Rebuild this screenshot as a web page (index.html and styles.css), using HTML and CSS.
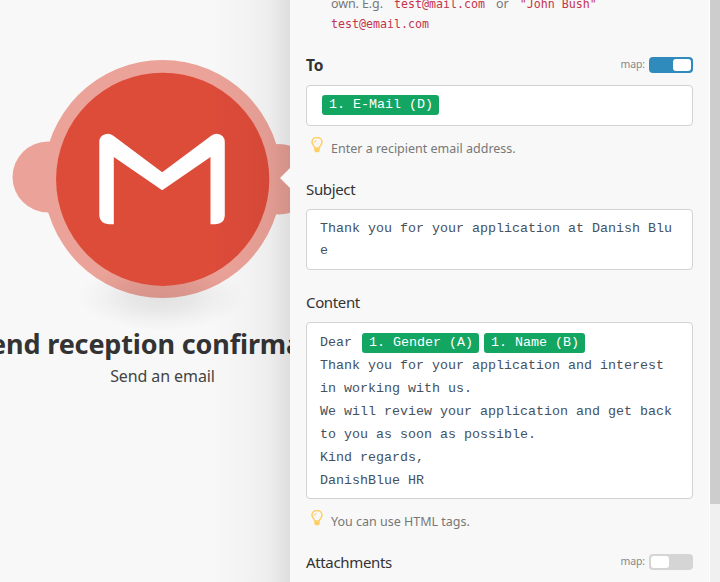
FILE: index.html
```html
<!DOCTYPE html>
<html lang="en">
<head>
<meta charset="utf-8">
<title>Send an email</title>
<link rel="stylesheet" href="styles.css">
</head>
<body>
<div class="app">
  <section class="canvas">
    <svg class="module" width="290" height="324" viewBox="0 0 290 324">
      <defs>
        <radialGradient id="shade">
          <stop offset="0" stop-color="#000" stop-opacity=".09"/>
          <stop offset=".35" stop-color="#000" stop-opacity=".07"/>
          <stop offset=".7" stop-color="#000" stop-opacity=".028"/>
          <stop offset="1" stop-color="#000" stop-opacity="0"/>
        </radialGradient>
      </defs>
      <g fill="#eba298">
        <circle cx="48" cy="177" r="35.5"/>
        <circle cx="279" cy="179.3" r="35.3"/>
        <circle cx="162.5" cy="179" r="119"/>
      </g>
      <ellipse cx="162" cy="297" rx="84" ry="34" fill="url(#shade)"/>
      <circle cx="162.7" cy="179.3" r="106.6" fill="#dd4b39"/>
      <path fill="#fff" d="M99.3 142 Q99.5 134 108 133.7 Q110.500 133.700 113 135.500 L162.200 172.200 L211.500 135.500 Q214 133.700 216.500 133.700 Q224.700 134.500 224.800 142 V216 Q224 224 215.500 224.200 H210.500 V157 L162.200 190.200 L113.800 157 V224.200 H109 Q100 223.500 99.300 216 Z"/>
    </svg>
    <h1 class="module-name"><span>Send reception confirmation</span></h1>
    <p class="module-action"><span>Send an email</span></p>
    <div class="edge-shadow"></div>
  </section>
  <main class="panel">
    <div class="arrow"></div>
    <div class="intro"><span class="own">own. E.g.</span><code class="mail">test@mail.com</code><span class="or">or</span><code class="john">"John Bush"</code><br><code>test@email.com</code></div>
    <div class="label-row to"><label class="strong">To</label><span class="map">map:</span><i class="toggle on"></i></div>
    <div class="field field-to"><span class="pill first">1. E-Mail (D)</span></div>
    <div class="hint"><svg class="bulb" width="12" height="16" viewBox="0 0 12 16"><path d="M3.800 11C3.500 8.800 1 8 1 5a5 4.500 0 0 1 10 0c0 3-2.500 3.800-2.800 6z" fill="none" stroke="#ffcd62" stroke-width="1.500"/><path d="M3.500 5.500Q3.700 3.700 5.500 3.300" fill="none" stroke="#ffcd62"/><path d="M3.300 11.500h5.400v2.300l-1.200 1.500h-3l-1.200-1.500z" fill="#ffcd62"/></svg><span class="hint-address">Enter a recipient email address.</span></div>
    <div class="label-row subject"><label class="l-subject">Subject</label></div>
    <div class="field field-subject">Thank you for your application at Danish Blu<br>e</div>
    <div class="label-row content"><label class="l-content">Content</label></div>
    <div class="field field-content"><div class="greeting"><span>Dear</span><span class="pill second">1. Gender (A)</span><span class="pill third">1. Name (B)</span></div><div>Thank you for your application and interest</div><div>in working with us.</div><div>We will review your application and get back</div><div>to you as soon as possible.</div><div>Kind regards,</div><div>DanishBlue HR</div></div>
    <div class="hint"><svg class="bulb" width="12" height="16" viewBox="0 0 12 16"><path d="M3.800 11C3.500 8.800 1 8 1 5a5 4.500 0 0 1 10 0c0 3-2.500 3.800-2.800 6z" fill="none" stroke="#ffcd62" stroke-width="1.500"/><path d="M3.500 5.500Q3.700 3.700 5.500 3.300" fill="none" stroke="#ffcd62"/><path d="M3.300 11.500h5.400v2.300l-1.200 1.500h-3l-1.200-1.500z" fill="#ffcd62"/></svg><span class="hint-tags">You can use HTML tags.</span></div>
    <div class="label-row attachments"><label class="l-attach">Attachments</label><span class="map">map:</span><i class="toggle"></i></div>
  </main>
  <div class="scrollbar"><div class="thumb"></div></div>
</div>
</body>
</html>
```

FILE: styles.css
```css
* { box-sizing: border-box; }
body { margin: 0; overflow: hidden; background: #f8f8f8; font-family: "Noto Sans", "Open Sans", sans-serif; color: #333; }
.app { display: flex; width: 720px; height: 582px; }
.canvas { position: relative; width: 290px; overflow: hidden; flex: none; }
.module { display: block; overflow: visible; }
.module-name, .module-action { margin: 0; width: 324px; white-space: nowrap; display: flex; justify-content: center; }
.module-name { font-size: 27px; line-height: 39px; height: 40px; font-weight: 700; letter-spacing: -0.15px; padding-left: 7px; }
.module-action { font-size: 16px; line-height: 24px; letter-spacing: -0.1px; padding-left: 1px; color: #444; }
.edge-shadow { position: absolute; inset: 0 0 0 auto; width: 74px; background: linear-gradient(to right, rgba(0,0,0,.005), rgba(0,0,0,.018) 40%, rgba(0,0,0,.045) 72%, rgba(0,0,0,.105)); }
.panel { position: relative; width: 419px; padding: 0 16px; flex: none; background: #f8f8f8; }
.arrow { position: absolute; left: -10px; top: 168px; width: 10px; height: 20px; background: #f8f8f8; clip-path: polygon(100% 0, 0 50%, 100% 100%); }
.intro { height: 51px; padding-left: 25px; font-size: 12.500px; line-height: 20px; margin-top: -6px; color: #777; white-space: nowrap; }
.own { letter-spacing: -0.1px; }
.intro code { font-family: "DejaVu Sans Mono", monospace; font-size: 11.630px; color: #c4344c; }
.mail { margin-left: 11px; }
.or { margin: 0 11px; }
.label-row { display: flex; align-items: center; height: 40px; font-size: 15px; letter-spacing: -0.35px; }
.label-row label { line-height: 20px; }
.label-row .strong { font-size: 15.500px; line-height: 22px; font-weight: 700; letter-spacing: -0.2px; }
.map { margin-left: auto; margin-right: 4px; font-size: 10.500px; letter-spacing: -0.15px; line-height: 14px; color: #888; position: relative; top: -1px; }
.toggle { position: relative; width: 44px; height: 16px; border-radius: 4px; background: #d5d5d5; }
.toggle::after { content: ""; position: absolute; left: 2px; top: 2px; width: 18px; height: 12px; border-radius: 3px; background: #fff; }
.toggle.on { background: #2f8bbb; }
.toggle.on::after { left: 24px; }
.field { border: 1px solid #d2d2d2; border-radius: 4px; background: #fff; padding: 8px 13px; font-family: "Liberation Mono", monospace; font-size: 13.333px; line-height: 23px; white-space: pre; color: #46515e; }
.field-to { height: 41px; }
.field-subject { height: 61px; line-height: 22px; }
.field-content { height: 177px; }
.field-content > div { height: 23px; }
.greeting { display: flex; align-items: center; }
.pill { display: inline-block; height: 20px; line-height: 20px; padding: 0 6px 0 7px; border-radius: 3px; background: #13a663; color: #fff; vertical-align: middle; }
.first { margin-left: 2px; }
.second { margin-left: 10px; }
.third { margin-left: 5px; }
.hint { display: flex; height: 43px; padding: 11px 0 0 5px; font-size: 12.500px; line-height: 23px; color: #777; white-space: nowrap; }
.bulb { margin-right: 8px; flex: none; }
.hint span { height: 23px; }
.content { height: 52px; padding-top: 12px; }
.attachments { height: 40px; }
.scrollbar { width: 11px; border-left: 1px solid #fff; background: #f0f0f0; flex: none; }
.thumb { height: 504px; background: #cdcdcd; }
```
